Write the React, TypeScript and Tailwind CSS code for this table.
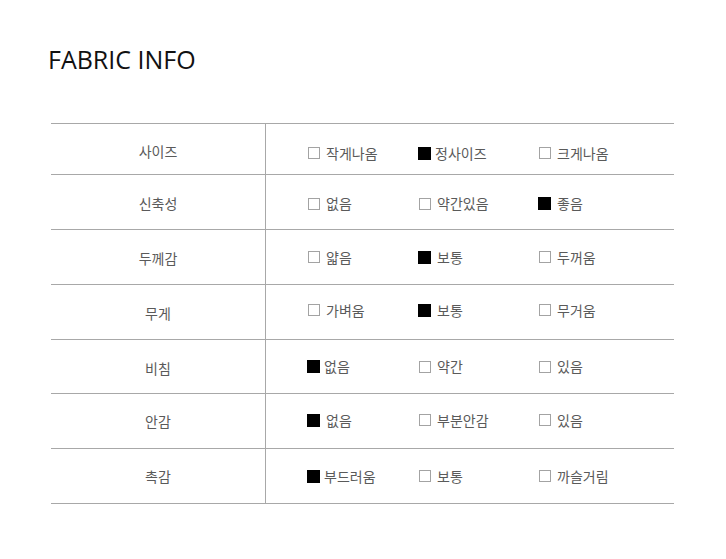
const rows = [
  {
    label: '사이즈',
    h: 'h-[51px]',
    labelPad: 'pt-[4px]',
    optPad: 'pt-[8px]',
    options: [
      { text: '작게나옴', on: false },
      { text: '정사이즈', on: true },
      { text: '크게나옴', on: false },
    ],
  },
  {
    label: '신축성',
    h: 'h-[55px]',
    labelPad: 'pt-[3px]',
    optPad: 'pt-[3px]',
    options: [
      { text: '없음', on: false },
      { text: '약간있음', on: false },
      { text: '좋음', on: true, gap: true },
    ],
  },
  {
    label: '두께감',
    h: 'h-[55px]',
    labelPad: 'pt-[3px]',
    optPad: 'pt-[0px]',
    options: [
      { text: '얇음', on: false },
      { text: '보통', on: true, gap: true },
      { text: '두꺼움', on: false },
    ],
  },
  {
    label: '무게',
    h: 'h-[55px]',
    labelPad: 'pt-[3px]',
    optPad: 'pb-[4px]',
    options: [
      { text: '가벼움', on: false },
      { text: '보통', on: true, gap: true },
      { text: '무거움', on: false },
    ],
  },
  {
    label: '비침',
    h: 'h-[54px]',
    labelPad: 'pt-[3px]',
    optPad: 'pt-[0px]',
    options: [
      { text: '없음', on: true },
      { text: '약간', on: false },
      { text: '있음', on: false },
    ],
  },
  {
    label: '안감',
    h: 'h-[55px]',
    labelPad: 'pt-[0px]',
    optPad: 'pb-[2px]',
    options: [
      { text: '없음', on: true, gap: true },
      { text: '부분안감', on: false },
      { text: '있음', on: false },
    ],
  },
  {
    label: '촉감',
    h: 'h-[55px]',
    labelPad: 'pt-[1px]',
    optPad: 'pt-[0px]',
    options: [
      { text: '부드러움', on: true },
      { text: '보통', on: false },
      { text: '까슬거림', on: false },
    ],
  },
];

function Check({ on, gap }: { on: boolean; gap?: boolean }) {
  if (on) {
    return <span className={`inline-block w-[13px] h-[13px] bg-black shrink-0 ${gap ? 'mr-[6px]' : 'mr-[4px]'}`} />;
  }
  return <span className="inline-block w-[12px] h-[12px] border border-[#a3a3a3] bg-white shrink-0 ml-[1px] mr-[6px]" />;
}

export default function App() {
  return (
    <div
      className="w-[726px] h-[559px] bg-white text-[#5a5a5a]"
      style={{ fontFamily: '"Noto Sans", "Noto Sans CJK KR", sans-serif' }}
    >
      <h1 className="pl-[48px] pt-[43px] text-[25px] leading-[33px] text-[#111] font-normal" style={{ fontFamily: '"Open Sans", "Noto Sans", sans-serif' }}>
        FABRIC INFO
      </h1>

      <div className="ml-[51px] mt-[47px] w-[623px] border-t border-[#a8a8a8]">
        {rows.map((row) => (
          <div key={row.label} className={`flex border-b border-[#a8a8a8] ${row.h}`}>
            <div className={`w-[215px] shrink-0 border-r border-[#a8a8a8] flex items-center justify-center text-[14px] ${row.labelPad}`}>
              {row.label}
            </div>
            <div className={`flex items-center pl-[41px] text-[14px] ${row.optPad}`}>
              {row.options.map((opt, i) => (
                <div key={i} className={`flex items-center ${i === 0 ? 'w-[111px]' : i === 1 ? 'w-[120px]' : 'w-[110px]'}`}>
                  <Check on={opt.on} gap={opt.gap} />
                  <span>{opt.text}</span>
                </div>
              ))}
            </div>
          </div>
        ))}
      </div>
    </div>
  );
}
